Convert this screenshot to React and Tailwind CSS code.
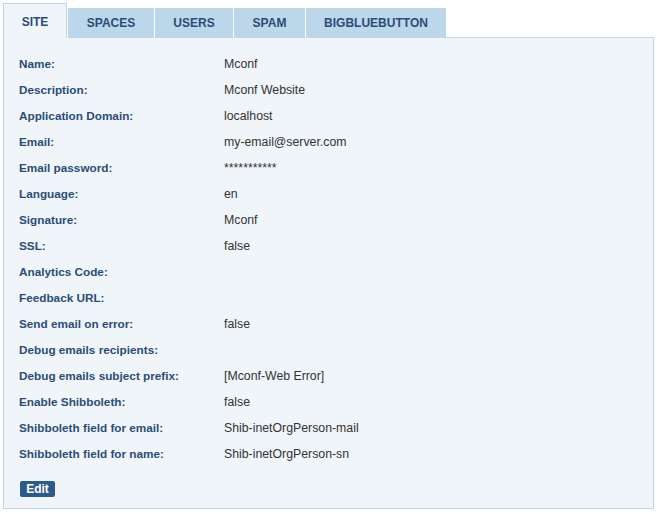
import React from "react";

const rows = [
  ["Name:", "Mconf"],
  ["Description:", "Mconf Website"],
  ["Application Domain:", "localhost"],
  ["Email:", "my-email@server.com"],
  ["Email password:", "***********"],
  ["Language:", "en"],
  ["Signature:", "Mconf"],
  ["SSL:", "false"],
  ["Analytics Code:", ""],
  ["Feedback URL:", ""],
  ["Send email on error:", "false"],
  ["Debug emails recipients:", ""],
  ["Debug emails subject prefix:", "[Mconf-Web Error]"],
  ["Enable Shibboleth:", "false"],
  ["Shibboleth field for email:", "Shib-inetOrgPerson-mail"],
  ["Shibboleth field for name:", "Shib-inetOrgPerson-sn"],
];

const tabs = [
  ["SPACES", "w-[86px]"],
  ["USERS", "w-[78px]"],
  ["SPAM", "w-[71px]"],
  ["BIGBLUEBUTTON", "w-[140px]"],
];

export default function App() {
  return (
    <div className="bg-white w-[657px] h-[514px] pl-[3px] pt-[3px] font-['Liberation_Sans',Arial,sans-serif]">
      <div className="flex items-end relative z-10 -mb-px">
        <div className="w-[64px] h-[35px] bg-[#f0f5fa] border border-b-0 border-[#bcd6ea] flex items-center justify-center pt-[2px] text-[12px] font-bold text-[#2a4d77]">
          SITE
        </div>
        <div className="flex gap-px bg-white pl-px">
          {tabs.map(([t, w]) => (
            <div
              key={t}
              className={`${w} h-[30px] bg-[#bcd6ea] flex items-center justify-center pb-[1px] text-[12px] font-bold text-[#2a4d77]`}
            >
              {t}
            </div>
          ))}
        </div>
      </div>
      <div className="w-[651px] h-[472px] bg-[#f0f5fa] border border-[#bcd6ea] pl-[15px] pt-[13px]">
        {rows.map(([l, v]) => (
          <div key={l} className="flex h-[26px] items-center">
            <div className="w-[205px] font-bold text-[11.75px] text-[#2a4d77]">{l}</div>
            <div className="text-[12.3px] text-[#333333]">{v}</div>
          </div>
        ))}
        <button className="mt-[14px] ml-px w-[35px] h-[16px] rounded-[2px] bg-[#2a5b8a] text-white text-[12px] font-bold leading-[16px] flex items-center justify-center">
          Edit
        </button>
      </div>
    </div>
  );
}
